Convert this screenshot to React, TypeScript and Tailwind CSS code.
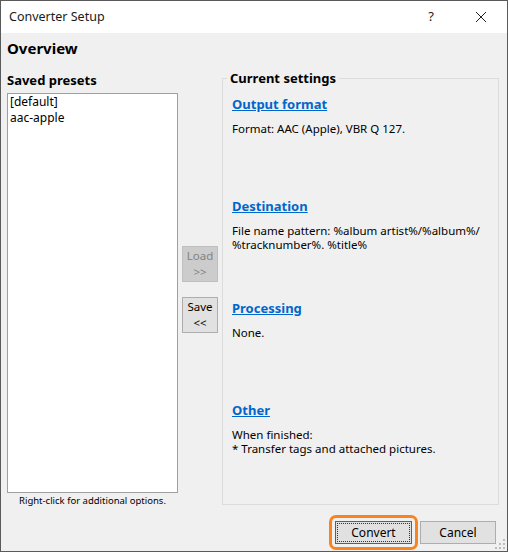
import React from "react"

// ─── Bits ─────────────────────────────────────────────────────────────────────

const FONT = { fontFamily: '"Noto Sans", "Open Sans", sans-serif' }

type Section = { title: string; lines: string[] }

const SECTIONS: Section[] = [
  { title: "Output format", lines: ["Format: AAC (Apple), VBR Q 127."] },
  { title: "Destination",   lines: ["File name pattern: %album artist%/%album%/", "%tracknumber%. %title%"] },
  { title: "Processing",    lines: ["None."] },
  { title: "Other",         lines: ["When finished:", "* Transfer tags and attached pictures."] },
]

function SideButton({ top, bottom, disabled }: { top: string; bottom: string; disabled?: boolean }) {
  return (
    <div className={`w-[36px] h-[36px] border flex flex-col items-center justify-center text-[11.5px] leading-[16px] ${
      disabled ? "border-[#bfbfbf] bg-[#cccccc] text-[#838383]" : "border-[#adadad] bg-[#e1e1e1] text-black"
    }`}>
      <span>{top}</span>
      <span>{bottom}</span>
    </div>
  )
}

function Grip() {
  const dots = [[8, 0], [4, 4], [8, 4], [0, 8], [4, 8], [8, 8]]
  return (
    <svg width="11" height="11" className="absolute right-[1px] bottom-[1px]">
      {dots.map(([x, y], i) => (
        <rect key={i} x={x} y={y} width="2" height="2" fill="#bcbcbc" />
      ))}
    </svg>
  )
}

// ─── Main ─────────────────────────────────────────────────────────────────────

export default function App() {
  return (
    <div style={FONT} className="w-[508px] h-[552px] border border-[#5a5a5a] bg-[#f0f0f0] flex flex-col relative text-black">

      {/* Title bar */}
      <div className="h-[32px] bg-white flex items-center shrink-0">
        <span className="ml-[8px] text-[12.5px] text-[#1a1a1a]">Converter Setup</span>
        <span className="ml-auto mr-[41px] text-[13px] text-[#222]">?</span>
        <svg width="12" height="12" className="mr-[20px]" viewBox="0 0 12 12">
          <path d="M1 1 L11 11 M11 1 L1 11" stroke="#222" strokeWidth="1" />
        </svg>
      </div>

      {/* Heading */}
      <div className="pl-[6px] pt-[4px] h-[27px] text-[15px] font-bold leading-[22px]">Overview</div>

      {/* Body */}
      <div className="flex pl-[6px] pr-[8px]">

        {/* Saved presets */}
        <div className="w-[171px] flex flex-col">
          <div className="text-[13px] font-bold leading-[16px] mt-[12px] h-[21px]">Saved presets</div>
          <div className="h-[400px] bg-white border border-[#a0a0a0] px-[2px] text-[12px] leading-[16px]">
            <div>[default]</div>
            <div>aac-apple</div>
          </div>
          <div className="text-[9.5px] leading-[14px] text-center mt-[1px]">Right-click for additional options.</div>
        </div>

        {/* Load / Save */}
        <div className="w-[44px] flex flex-col items-center pt-[186px] gap-[15px]">
          <SideButton top="Load" bottom=">>" disabled />
          <SideButton top="Save" bottom="<<" />
        </div>

        {/* Current settings */}
        <div className="flex-1 mt-[18px] h-[427px] border border-[#dcdcdc] relative pl-[9px]">
          <span className="absolute -top-[9px] left-[4px] px-[3px] bg-[#f0f0f0] text-[13px] font-bold leading-[16px]">
            Current settings
          </span>
          <div className="pt-[17px]">
            {SECTIONS.map((s) => (
              <div key={s.title} className="h-[102px]">
                <div className="text-[13px] font-bold text-[#0066cc] underline leading-[16px] h-[26px]">{s.title}</div>
                {s.lines.map((l) => (
                  <div key={l} className="text-[11.5px] leading-[14px]">{l}</div>
                ))}
              </div>
            ))}
          </div>
        </div>
      </div>

      {/* Buttons */}
      <div className="flex justify-end items-center mt-[7px] pr-[11px] gap-[2px]">
        <div className="rounded-[7px] border-[3px] border-[#f7841f] p-[3px]">
          <div className="w-[77px] h-[23px] border border-[#0078d7] bg-[#e1e1e1] p-[1px]">
            <div className="w-full h-full border border-dotted border-[#333] flex items-center justify-center text-[12px]">
              Convert
            </div>
          </div>
        </div>
        <div className="w-[76px] h-[23px] border border-[#adadad] bg-[#e1e1e1] flex items-center justify-center text-[12px]">
          Cancel
        </div>
      </div>

      <Grip />
    </div>
  )
}
